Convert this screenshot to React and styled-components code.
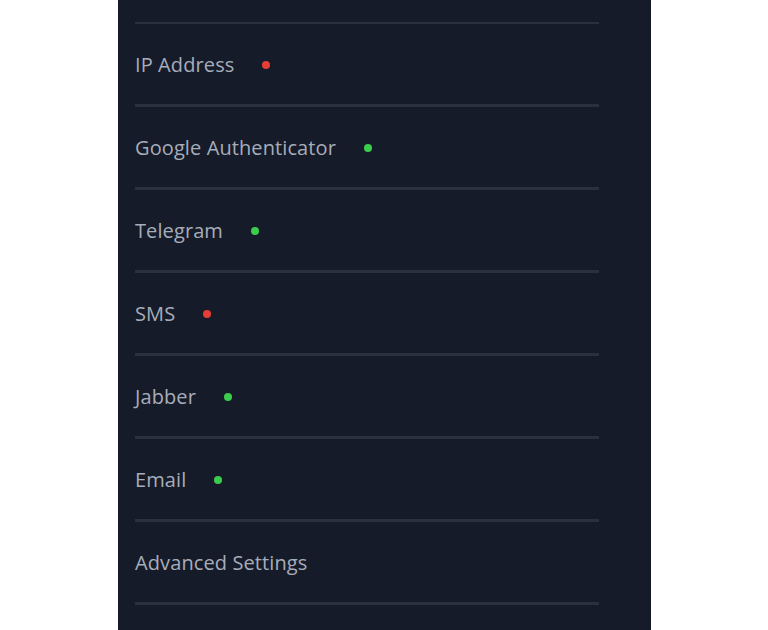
import styled, { createGlobalStyle } from "styled-components";

const GlobalStyle = createGlobalStyle`
  body {
    margin: 0;
    background: #ffffff;
    font-family: "Open Sans", "Noto Sans", sans-serif;
  }
`;

const Panel = styled.div`
  margin-left: 118px;
  width: 533px;
  height: 630px;
  box-sizing: border-box;
  padding: 22px 52px 0 17px;
  background: #161b29;
  overflow: hidden;
`;

const Divider = styled.div`
  height: ${(p) => (p.thin ? "2px" : "3px")};
  background: #2b303d;
`;

const Row = styled.div`
  display: flex;
  align-items: center;
  height: 80px;
`;

const Label = styled.span`
  font-size: 20px;
  color: #a6adba;
  letter-spacing: 0.1px;
`;

const Dot = styled.span`
  width: 8px;
  height: 8px;
  border-radius: 50%;
  margin-left: 28px;
  margin-top: 2px;
  background: ${(p) => (p.on ? "#3ccc4c" : "#e63d35")};
`;

const items = [
  { name: "IP Address", on: false },
  { name: "Google Authenticator", on: true },
  { name: "Telegram", on: true },
  { name: "SMS", on: false },
  { name: "Jabber", on: true },
  { name: "Email", on: true },
  { name: "Advanced Settings" },
];

function App() {
  return (
    <>
      <GlobalStyle />
      <Panel>
        <Divider thin />
        {items.map((it) => (
          <div key={it.name}>
            <Row>
              <Label>{it.name}</Label>
              {it.on !== undefined && <Dot on={it.on} />}
            </Row>
            <Divider />
          </div>
        ))}
      </Panel>
    </>
  );
}

export default App;
